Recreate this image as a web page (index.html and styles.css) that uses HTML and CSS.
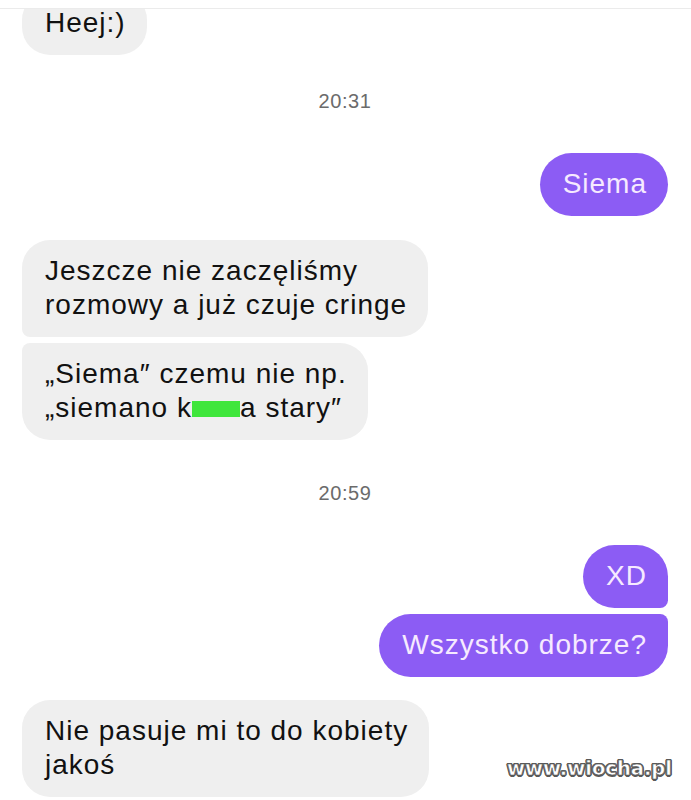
FILE: index.html
```html
<!DOCTYPE html>
<html lang="pl">
<head>
    <meta charset="UTF-8">
    <meta name="viewport" content="width=device-width, initial-scale=1.0">
    <title>Rozmowa</title>
    <link rel="stylesheet" href="styles.css">
</head>
<body>

<div class="topbar"></div>

<main class="chat">
    <div class="msg in first">Heej:)</div>

    <div class="time">20:31</div>

    <div class="msg out solo">Siema</div>

    <div class="msg in top">Jeszcze nie zaczęliśmy<br>rozmowy a już czuje cringe</div>
    <div class="msg in bottom next">„Siema″ czemu nie np.<br>„siemano k<span class="censor">urw</span>a stary″</div>

    <div class="time late">20:59</div>

    <div class="msg out top xd">XD</div>
    <div class="msg out bottom next">Wszystko dobrze?</div>

    <div class="msg in last">Nie pasuje mi to do kobiety<br>jakoś</div>
</main>

<div class="watermark">www.wiocha.pl</div>

</body>
</html>
```

FILE: styles.css
```css
body {
    margin: 0;
    padding: 0;
    background: #fff;
    font-family: "Liberation Sans", Arial, sans-serif;
    width: 691px;
    height: 800px;
    overflow: hidden;
    position: relative;
}
.topbar {
    height: 8px;
    border-bottom: 1px solid #ebebeb;
    background: #fff;
}
.chat {
    display: flex;
    flex-direction: column;
    padding: 0 23px 0 22px;
    overflow: hidden;
    height: 791px;
}
.msg {
    font-size: 28px;
    line-height: 34px;
    letter-spacing: 1px;
    padding: 14px 21px 15px 23px;
    border-radius: 28px;
    white-space: nowrap;
}
.in {
    align-self: flex-start;
    background: #efefef;
    color: #111;
}
.out {
    align-self: flex-end;
    background: #8c5cf4;
    color: #f6eaff;
    border-radius: 32px;
}
.in.top {
    border-bottom-left-radius: 8px;
}
.in.bottom {
    border-top-left-radius: 8px;
}
.out.top {
    border-bottom-right-radius: 8px;
}
.out.bottom {
    border-top-right-radius: 8px;
}
/* first bubble is cut by the top edge */
.first {
    margin-top: -17px;
    line-height: 28px;
    padding-top: 17px;
    padding-bottom: 18px;
}
.time {
    align-self: center;
    margin-top: 34px;
    font-size: 20px;
    line-height: 24px;
    letter-spacing: 0.6px;
    color: #6b6b6b;
}
.solo {
    margin-top: 40px;
}
.msg.in.top {
    margin-top: 24px;
}
.next {
    margin-top: 6px;
}
.time.late {
    margin-top: 41px;
}
.xd {
    margin-top: 40px;
}
.last {
    margin-top: 23px;
}
.censor {
    color: #3fe63c;
    background: linear-gradient(transparent 30%, #3fe63c 30%, #3fe63c 80%, transparent 80%);
    border-radius: 5px;
}
.watermark {
    position: absolute;
    right: 19px;
    top: 757px;
    font-family: "DejaVu Sans", sans-serif;
    font-weight: bold;
    font-size: 19.5px;
    color: #fff;
    -webkit-text-stroke: 0.5px #555;
    text-shadow: 1px 1px 0 #5a5a5a, -1px -1px 0 #5a5a5a, 1px -1px 0 #5a5a5a, -1px 1px 0 #5a5a5a,
        0 1.5px 0 #5a5a5a, 0 -1.5px 0 #5a5a5a, 1.5px 0 0 #5a5a5a, -1.5px 0 0 #5a5a5a;
}
```
